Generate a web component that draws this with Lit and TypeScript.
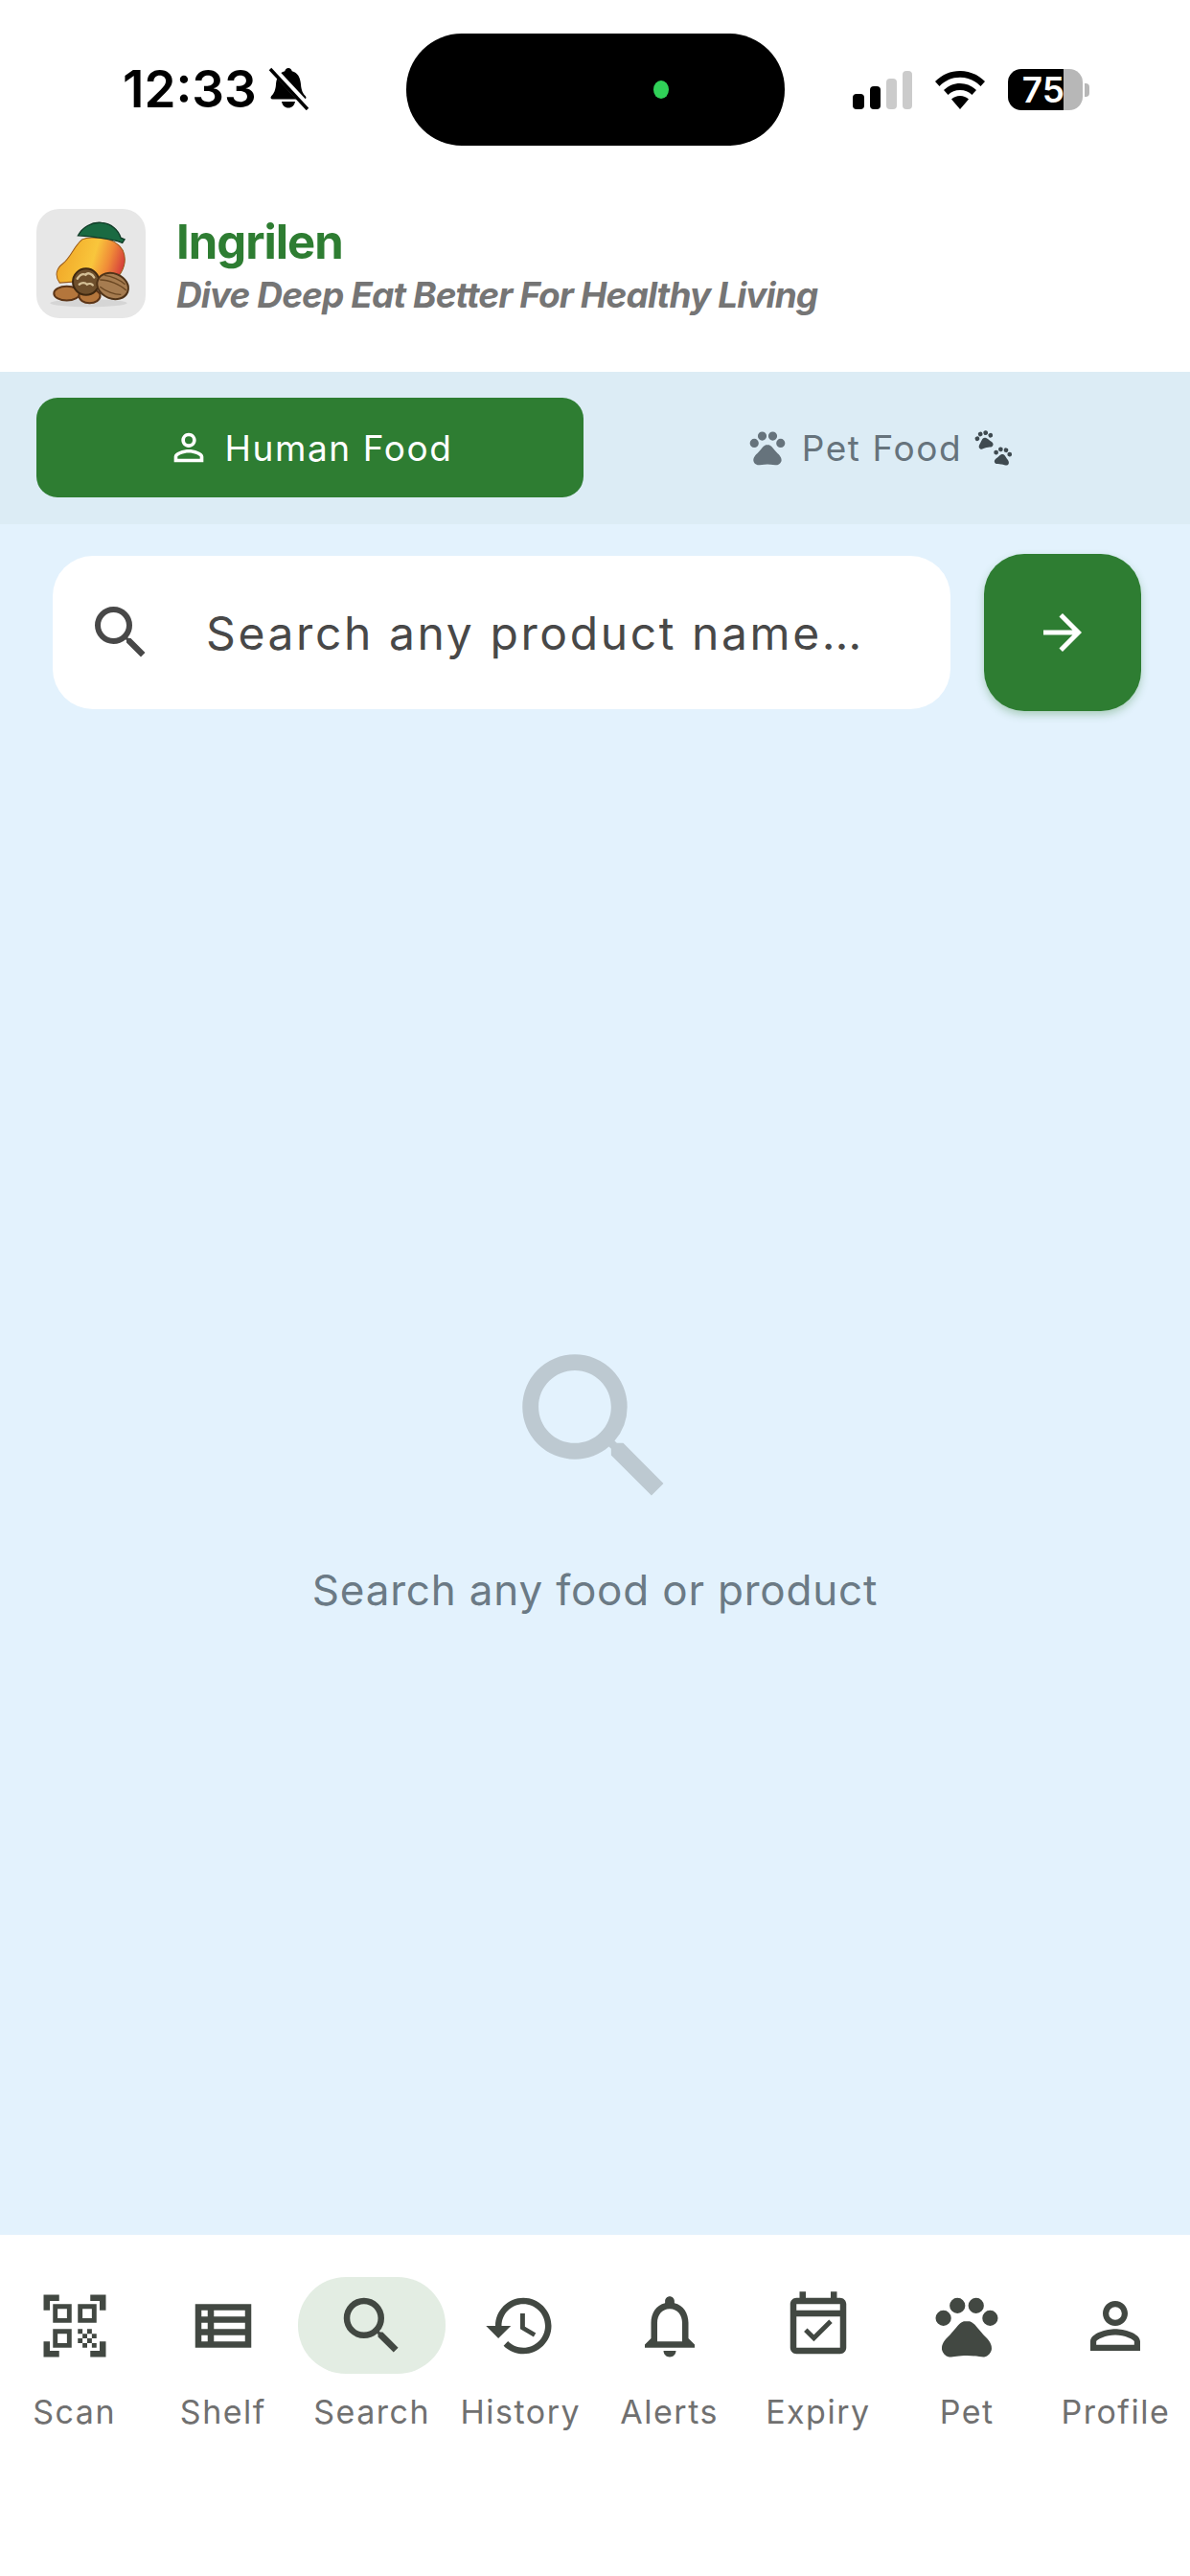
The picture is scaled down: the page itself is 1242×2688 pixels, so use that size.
import { LitElement, html, css } from 'lit';
import { customElement } from 'lit/decorators.js';

// Material icon paths, 24 unit box
const SEARCH =
  'M15.5 14h-.79l-.28-.27A6.471 6.471 0 0 0 16 9.5 6.5 6.5 0 1 0 9.5 16c1.61 0 3.09-.59 4.23-1.57l.27.28v.79l5 4.99L20.49 19l-4.99-5zm-6 0C7.01 14 5 11.99 5 9.5S7.01 5 9.5 5 14 7.01 14 9.5 11.99 14 9.5 14z';
const QR =
  'M9.5 6.5v3h-3v-3h3M11 5H5v6h6V5zm-1.5 9.5v3h-3v-3h3M11 13H5v6h6v-6zm6.5-6.5v3h-3v-3h3M19 5h-6v6h6V5zm-6 8h1.5v1.5H13V13zm1.5 1.5H16V16h-1.5v-1.5zM16 13h1.5v1.5H16V13zm-3 3h1.5v1.5H13V16zm1.5 1.5H16V19h-1.5v-1.5zM16 16h1.5v1.5H16V16zm1.5-1.5H19V16h-1.5v-1.5zm0 3H19V19h-1.5v-1.5zM22 7h-2V4h-3V2h5v5zm0 15v-5h-2v3h-3v2h5zM2 22h5v-2H4v-3H2v5zM2 2v5h2V4h3V2H2z';
const SHELF =
  'M3 5v14h18V5H3zm4 2v2H5V7h2zm-2 6v-2h2v2H5zm0 2h2v2H5v-2zm14 2H9v-2h10v2zm0-4H9v-2h10v2zm0-4H9V7h10v2z';
const HISTORY =
  'M13 3c-4.97 0-9 4.03-9 9H1l3.89 3.89.07.14L9 12H6c0-3.87 3.13-7 7-7s7 3.13 7 7-3.13 7-7 7c-1.93 0-3.68-.79-4.94-2.06l-1.42 1.42C8.27 19.99 10.51 21 13 21c4.97 0 9-4.03 9-9s-4.03-9-9-9zm-1 5v5l4.28 2.54.72-1.21-3.5-2.08V8H12z';
const BELL =
  'M12 22c1.1 0 2-.9 2-2h-4c0 1.1.9 2 2 2zm6-6v-5c0-3.07-1.64-5.64-4.5-6.32V4c0-.83-.67-1.5-1.5-1.5s-1.5.67-1.5 1.5v.68C7.63 5.36 6 7.92 6 11v5l-2 2v1h16v-1l-2-2zm-2 1H8v-6c0-2.48 1.51-4.5 4-4.5s4 2.02 4 4.5v6z';
const EXPIRY =
  'M19 3h-1V1h-2v2H8V1H6v2H5c-1.1 0-2 .9-2 2v14c0 1.1.9 2 2 2h14c1.1 0 2-.9 2-2V5c0-1.1-.9-2-2-2zm0 16H5V9h14v10zm0-12H5V5h14v2zM16.53 11.06L15.47 10l-4.88 4.88-2.12-2.12-1.06 1.06L10.59 17l5.94-5.94z';
const PAW =
  'M4.5 7a2.5 2.5 0 1 0 0 5 2.5 2.5 0 1 0 0-5zM9 3a2.5 2.5 0 1 0 0 5 2.5 2.5 0 1 0 0-5zM15 3a2.5 2.5 0 1 0 0 5 2.5 2.5 0 1 0 0-5zM19.5 7a2.5 2.5 0 1 0 0 5 2.5 2.5 0 1 0 0-5zM17.34 14.86c-.87-1.02-1.6-1.89-2.48-2.91-.46-.54-1.05-1.08-1.75-1.32-.11-.04-.22-.07-.33-.09-.25-.04-.52-.04-.78-.04s-.53 0-.79.05c-.11.02-.22.05-.33.09-.7.24-1.28.78-1.75 1.32-.87 1.02-1.6 1.89-2.48 2.91-1.31 1.31-2.92 2.76-2.62 4.79.29 1.02 1.02 2.03 2.33 2.32.73.15 3.06-.44 5.54-.44h.18c2.48 0 4.81.58 5.54.44 1.31-.29 2.04-1.31 2.33-2.32.31-2.04-1.3-3.49-2.61-4.8z';
const PERSON =
  'M12 5.9a2.1 2.1 0 1 1 0 4.2 2.1 2.1 0 0 1 0-4.2m0 9c2.97 0 6.1 1.46 6.1 2.1v1.1H5.9V17c0-.64 3.13-2.1 6.1-2.1M12 4C9.79 4 8 5.79 8 8s1.79 4 4 4 4-1.79 4-4-1.79-4-4-4zm0 9c-2.67 0-8 1.34-8 4v3h16v-3c0-2.66-5.33-4-8-4z';
const ARROW = 'M12 4l-1.41 1.41L16.17 11H4v2h12.17l-5.58 5.59L12 20l8-8z';

const NAV = [
  { label: 'Scan', icon: QR },
  { label: 'Shelf', icon: SHELF },
  { label: 'Search', icon: SEARCH, active: true },
  { label: 'History', icon: HISTORY },
  { label: 'Alerts', icon: BELL },
  { label: 'Expiry', icon: EXPIRY },
  { label: 'Pet', icon: PAW },
  { label: 'Profile', icon: PERSON },
];

const icon = (d: string, size: number) =>
  html`<svg class="icon" width=${size} height=${size} viewBox="0 0 24 24">
    <path d=${d} fill="currentColor" fill-rule="evenodd"></path>
  </svg>`;

@customElement('app-root')
export class AppRoot extends LitElement {
  static styles = css`
    :host {
      display: flex;
      flex-direction: column;
      width: 1242px;
      height: 2688px;
      background: #fff;
      font-family: Inter, 'Liberation Sans', sans-serif;
      overflow: hidden;
    }

    .icon {
      display: block;
      flex: none;
    }

    /* status bar */
    .status {
      display: flex;
      align-items: flex-start;
      height: 190px;
      box-sizing: border-box;
      padding: 35px 0 0 128px;
    }
    .clock {
      display: flex;
      align-items: center;
      gap: 12px;
      width: 296px;
      height: 117px;
      margin-top: -1px;
      color: #000;
      font-size: 53px;
      font-weight: 600;
      letter-spacing: 0;
    }
    .island {
      display: flex;
      justify-content: flex-end;
      align-items: center;
      box-sizing: border-box;
      width: 395px;
      height: 117px;
      padding-right: 121px;
      border-radius: 58px;
      background: #000;
    }
    .island i {
      width: 16px;
      height: 19px;
      border-radius: 50%;
      background: #30d158;
    }
    .indicators {
      display: flex;
      align-items: center;
      gap: 24px;
      height: 117px;
      margin-left: 71px;
    }
    .battery {
      display: flex;
      align-items: center;
      width: 85px;
      height: 44px;
    }
    .cell {
      display: flex;
      justify-content: flex-end;
      align-items: center;
      box-sizing: border-box;
      width: 78px;
      height: 43px;
      padding-right: 19px;
      border-radius: 14px;
      background: linear-gradient(90deg, #000 58px, #b7b7b7 58px);
      color: #fff;
      font-size: 37px;
      font-weight: 600;
    }
    .nib {
      width: 5px;
      height: 14px;
      margin-left: 2px;
      border-radius: 0 4px 4px 0;
      background: #b7b7b7;
    }

    /* header */
    .brand {
      display: flex;
      align-items: center;
      gap: 32px;
      height: 198px;
      box-sizing: border-box;
      padding: 0 0 28px 38px;
    }
    .logo {
      display: block;
      width: 114px;
      height: 114px;
      border-radius: 24px;
      background: #e7e7e7;
    }
    .title {
      margin-top: 3px;
      color: #2e7d32;
      font-size: 49px;
      font-weight: 700;
      letter-spacing: -1px;
      line-height: 60px;
    }
    .tagline {
      margin-top: 3px;
      color: #757575;
      font-size: 37px;
      font-style: italic;
      font-weight: 700;
      letter-spacing: -0.9px;
      line-height: 44px;
    }

    /* food tabs */
    .tabs {
      display: grid;
      grid-template-columns: 1fr 1fr;
      gap: 24px;
      padding: 27px 38px 28px;
      background: #dcecf5;
    }
    .tab {
      display: flex;
      justify-content: center;
      align-items: center;
      gap: 14px;
      height: 104px;
      border-radius: 22px;
      color: #66737c;
      font-size: 37px;
      font-weight: 400;
      letter-spacing: 1.6px;
    }
    .tab.on {
      background: #2e7d32;
      color: #fff;
    }
    .prints {
      margin-left: -2px;
    }

    /* search */
    main {
      display: flex;
      flex-direction: column;
      flex: 1;
      background: #e3f2fd;
    }
    .search {
      display: flex;
      align-items: center;
      gap: 35px;
      padding: 31px 51px 0 55px;
    }
    .field {
      display: flex;
      flex: 1;
      align-items: center;
      gap: 53px;
      height: 160px;
      box-sizing: border-box;
      padding-left: 35px;
      border-radius: 42px;
      background: #fff;
      color: #484848;
      font-size: 48px;
      letter-spacing: 2.6px;
    }
    .go {
      display: flex;
      justify-content: center;
      align-items: center;
      width: 164px;
      height: 164px;
      border-radius: 42px;
      background: #2e7d32;
      box-shadow: 0 4px 8px rgba(46, 125, 50, 0.3);
      color: #fff;
    }
    .empty {
      display: flex;
      flex: 1;
      flex-direction: column;
      justify-content: center;
      align-items: center;
      color: #bdc9d1;
    }
    .empty p {
      margin: 42px 0 0;
      color: #6b7a85;
      font-size: 44px;
      letter-spacing: 0.8px;
      line-height: 54px;
    }

    /* bottom nav */
    nav {
      display: grid;
      grid-template-columns: repeat(8, 1fr);
      height: 356px;
      box-sizing: border-box;
      padding-top: 44px;
      background: #fff;
    }
    .item {
      display: flex;
      flex-direction: column;
      align-items: center;
      color: #424842;
    }
    .pill {
      display: flex;
      justify-content: center;
      align-items: center;
      width: 154px;
      height: 101px;
      border-radius: 50px;
    }
    .item.on .pill {
      background: #e3ede3;
    }
    .item span {
      margin-top: 18px;
      color: #707070;
      font-size: 34px;
      letter-spacing: 1.5px;
      line-height: 44px;
    }
  `;

  render() {
    return html`
      <div class="status">
        <div class="clock">
          12:33
          <svg width="42" height="45" viewBox="0 0 42 45">
            <path
              d="M21 1c2 0 3.400 1.300 3.700 3.200C30.800 5.800 33.500 11 34 18c.4 6 2 9.500 5 12.500 1 1.200.4 3-1.500 3H4.500C2.600 33.500 2 31.700 3 30.500 6 27.500 7.600 24 8 18c.5-7 3.200-12.200 9.300-13.800C17.600 2.300 19 1 21 1zM14 36h14c-.5 3.800-3.400 6.500-7 6.500s-6.500-2.700-7-6.500z"
              fill="#000"
            ></path>
            <path d="M2 -1L42 42" stroke="#fff" stroke-width="7"></path>
            <path d="M2 2L41 44" stroke="#000" stroke-width="3.500"></path>
          </svg>
        </div>
        <div class="island"><i></i></div>
        <div class="indicators">
          <svg width="62" height="40" viewBox="0 0 62 40">
            <rect x="0" y="24" width="12" height="16" rx="4" fill="#000"></rect>
            <rect x="18" y="16" width="11" height="24" rx="4" fill="#000"></rect>
            <rect x="35" y="8" width="11" height="32" rx="4" fill="#cbcbcb"></rect>
            <rect x="52" y="0" width="10" height="40" rx="4" fill="#cbcbcb"></rect>
          </svg>
          <svg width="52" height="40" viewBox="0 0 52 40">
            <path
              d="M26 0C16 0 7.500 3.800 0 11l4.500 5C10.500 10 17.500 6.800 26 6.800S41.500 10 47.500 16l4.500-5C44.500 3.800 36 0 26 0zM26 13c-6.500 0-12 2.400-17 7l4.500 5c3.500-3.300 7.500-5 12.500-5s9 1.700 12.500 5l4.500-5c-5-4.600-10.500-7-17-7zM26 26c-3.600 0-6.500 1.300-9 3.500L26 40l9-10.500c-2.500-2.200-5.400-3.500-9-3.500z"
              fill="#000"
            ></path>
          </svg>
          <div class="battery">
            <div class="cell">75</div>
            <div class="nib"></div>
          </div>
        </div>
      </div>

      <header class="brand">
        <svg class="logo" viewBox="55 55 335 340">
          <defs>
            <linearGradient id="mango" x1="0" y1="0.3" x2="1" y2="0.5">
              <stop offset="0" stop-color="#f0a526"></stop>
              <stop offset="0.55" stop-color="#f9c63c"></stop>
              <stop offset="0.78" stop-color="#f08a38"></stop>
              <stop offset="1" stop-color="#d6403c"></stop>
            </linearGradient>
          </defs>
          <ellipse cx="215" cy="348" rx="120" ry="12" fill="#d5d5d5"></ellipse>
          <path
            d="M195 150C170 170 160 205 135 225 115 240 108 262 125 285L300 272C325 250 335 215 322 185 305 155 270 145 240 145 220 143 205 145 195 150Z"
            fill="url(#mango)"
            stroke="#9a5a18"
            stroke-width="3"
          ></path>
          <path
            d="M182 138C195 112 225 95 255 98 285 100 308 120 315 145L327 150 320 161 305 155C270 147 220 140 182 138Z"
            fill="#1a6a42"
            stroke="#0f3a26"
            stroke-width="4"
          ></path>
          <ellipse cx="147" cy="318" rx="40" ry="22" fill="#b4763c" stroke="#5c3517" stroke-width="6"></ellipse>
          <ellipse cx="218" cy="326" rx="33" ry="22" fill="#b4763c" stroke="#5c3517" stroke-width="6"></ellipse>
          <circle cx="207" cy="282" r="41" fill="#6e4f2c" stroke="#3f2810" stroke-width="6"></circle>
          <path
            d="M180 272c8-12 18-16 26-12 6-8 20-4 26 8M186 290c8-6 18-6 24 0 6-4 14-2 18 2"
            fill="none"
            stroke="#d4bf96"
            stroke-width="7"
            stroke-linecap="round"
          ></path>
          <g transform="rotate(22 290 295)">
            <ellipse cx="290" cy="295" rx="50" ry="39" fill="#a67c50" stroke="#4f3318" stroke-width="6"></ellipse>
            <path d="M246 292c24-10 64-10 88 0M254 274c20-6 52-6 70 2M254 312c20 6 52 6 70-2" fill="none" stroke="#6a4722" stroke-width="4"></path>
          </g>
        </svg>
        <div>
          <div class="title">Ingrilen</div>
          <div class="tagline">Dive Deep Eat Better For Healthy Living</div>
        </div>
      </header>

      <div class="tabs">
        <div class="tab on">${icon(PERSON, 46)}Human Food</div>
        <div class="tab">
          ${icon(PAW, 44)}Pet Food
          <svg class="prints" width="42" height="40" viewBox="0 0 42 40" fill="#3f4a50">
            <g transform="translate(0 0) rotate(-14 11 11) scale(0.95)">
              <path d=${PAW}></path>
            </g>
            <g transform="translate(19 17) rotate(8 11 11) scale(0.95)">
              <path d=${PAW}></path>
            </g>
          </svg>
        </div>
      </div>

      <main>
        <div class="search">
          <div class="field">${icon(SEARCH, 72)}Search any product name…</div>
          <div class="go">${icon(ARROW, 60)}</div>
        </div>
        <div class="empty">
          ${icon(SEARCH, 202)}
          <p>Search any food or product</p>
        </div>
      </main>

      <nav>
        ${NAV.map(
          (item) => html`
            <div class="item ${item.active ? 'on' : ''}">
              <div class="pill">${icon(item.icon, 78)}</div>
              <span>${item.label}</span>
            </div>
          `,
        )}
      </nav>
    `;
  }
}
